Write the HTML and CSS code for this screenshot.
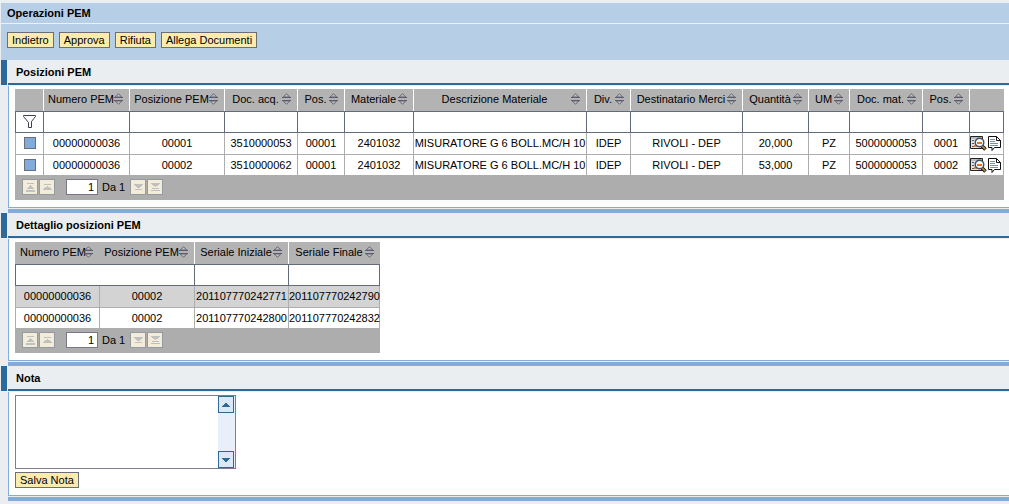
FILE: index.html
```html
<!DOCTYPE html>
<html lang="it">
<head>
<meta charset="utf-8">
<title>Operazioni PEM</title>
<link rel="stylesheet" href="styles.css">
</head>
<body>
<svg class="sprite" aria-hidden="true">
  <symbol id="sort" viewBox="0 0 9 12">
    <path d="M4.5 0.7 L7.6 4 H1.4 Z" fill="#c4c4cb" stroke="#62626f"/>
    <path d="M4.5 11.3 L7.6 8 H1.4 Z" fill="#c4c4cb" stroke="#62626f"/>
    <path d="M0 4h9v1H0zM0 7h9v1H0z" fill="#5c5c6c"/>
  </symbol>
  <symbol id="funnel" viewBox="0 0 13 14">
    <path d="M0.5 0.5 H12.5 V1.5 L8.5 6.5 V12.5 H5.5 V7.5 L0.5 1.5 Z" fill="#fff" stroke="#3c3c50"/>
  </symbol>
  <symbol id="first" viewBox="0 0 14 14">
    <path d="M4 3h7v1H4zM7 5h1v1h1v1h1v1h1v1H4V8h1V7h1V6h1zM3 10h9v2H3z"/>
  </symbol>
  <symbol id="prev" viewBox="0 0 14 14">
    <path d="M4 4h7v1H4zM7 6h1v1h2v1h1v1H4V8h1V7h2zM3 9h9v1H3z"/>
  </symbol>
  <symbol id="next" viewBox="0 0 14 14">
    <path d="M3 4h9v1H3zM4 5h7v1h-1v1H9v1H6V7H5V6H4zM4 9h7v1H4z"/>
  </symbol>
  <symbol id="last" viewBox="0 0 14 14">
    <path d="M3 3h9v1H3zM4 4h7v1h-1v1H8v1H7V6H5V5H4zM4 8h7v1H4zM3 10h9v1H3z"/>
  </symbol>
  <symbol id="detail" viewBox="0 0 17 15">
    <path d="M0.5 0.5h12v12H0.5z" fill="#dfe3e8" stroke="#222"/>
    <path d="M1 1h11v2H1z" fill="#b9bec5"/>
    <path d="M2 4h2v1H2zM2 7h2v1H2zM2 10h2v1H2z" fill="#4d5a68"/>
    <path d="M4 9h3v2H4z" fill="#f08030"/>
    <path d="M12 10 L15.5 13.5" stroke="#111" stroke-width="3.6"/>
    <path d="M12.2 10.2 L15.2 13.2" stroke="#b98748" stroke-width="1.8"/>
    <circle cx="9.5" cy="6.5" r="4.3" fill="#f4f7fc" stroke="#4a4e58" stroke-width="1.4"/>
    <path d="M7 6h5v2H7z" fill="#f07018"/>
  </symbol>
  <symbol id="note" viewBox="0 0 14 15">
    <path d="M0.5 0.5h8l4 4v7h-6l-2.5 3v-3h-3.5z" fill="#fff" stroke="#111"/>
    <path d="M8.5 0.5v4h4z" fill="#fff" stroke="#111"/>
    <path d="M2 3h5v1H2zM2 5h5v1H2zM2 7h8v1H2zM2 9h8v1H2z" fill="#7d90a8"/>
  </symbol>
</svg>

<header class="page-header">
  <h1>Operazioni PEM</h1>
  <div class="toolbar">
    <button class="btn" type="button">Indietro</button>
    <button class="btn" type="button">Approva</button>
    <button class="btn" type="button">Rifiuta</button>
    <button class="btn" type="button">Allega Documenti</button>
  </div>
</header>

<main>
<section class="panel">
  <div class="panel-title"><h2>Posizioni PEM</h2></div>
  <div class="panel-frame"><div class="panel-body">
    <table class="grid grid-wide">
      <colgroup><col class="w28"><col class="w86"><col class="w95"><col class="w73"><col class="w47"><col class="w69"><col class="w173"><col class="w44"><col class="w112"><col class="w66"><col class="w41"><col class="w73"><col class="w47"><col class="w35"></colgroup>
      <thead>
        <tr class="head">
          <th></th>
          <th><div class="label"><span>Numero PEM</span><svg><use href="#sort"/></svg></div></th>
          <th><div class="label"><span>Posizione PEM</span><svg><use href="#sort"/></svg></div></th>
          <th><div class="label"><span>Doc. acq.</span><svg><use href="#sort"/></svg></div></th>
          <th><div class="label"><span>Pos.</span><svg><use href="#sort"/></svg></div></th>
          <th><div class="label"><span>Materiale</span><svg><use href="#sort"/></svg></div></th>
          <th><div class="label"><span>Descrizione Materiale</span><svg><use href="#sort"/></svg></div></th>
          <th><div class="label"><span>Div.</span><svg><use href="#sort"/></svg></div></th>
          <th><div class="label"><span>Destinatario Merci</span><svg><use href="#sort"/></svg></div></th>
          <th><div class="label"><span>Quantità</span><svg><use href="#sort"/></svg></div></th>
          <th><div class="label"><span>UM</span><svg><use href="#sort"/></svg></div></th>
          <th><div class="label"><span>Doc. mat.</span><svg><use href="#sort"/></svg></div></th>
          <th><div class="label"><span>Pos.</span><svg><use href="#sort"/></svg></div></th>
          <th></th>
        </tr>
        <tr class="filter">
          <td><button class="icon-btn" type="button" aria-label="Filtra"><svg class="funnel"><use href="#funnel"/></svg></button></td>
          <td><input type="text" aria-label="Filtro Numero PEM"></td>
          <td><input type="text" aria-label="Filtro Posizione PEM"></td>
          <td><input type="text" aria-label="Filtro Doc. acq."></td>
          <td><input type="text" aria-label="Filtro Pos."></td>
          <td><input type="text" aria-label="Filtro Materiale"></td>
          <td><input type="text" aria-label="Filtro Descrizione Materiale"></td>
          <td><input type="text" aria-label="Filtro Div."></td>
          <td><input type="text" aria-label="Filtro Destinatario Merci"></td>
          <td><input type="text" aria-label="Filtro Quantità"></td>
          <td><input type="text" aria-label="Filtro UM"></td>
          <td><input type="text" aria-label="Filtro Doc. mat."></td>
          <td><input type="text" aria-label="Filtro Pos. mat."></td>
          <td></td>
        </tr>
      </thead>
      <tbody>
        <tr>
          <td><button class="marker" type="button" aria-label="Seleziona riga 1"></button></td>
          <td>00000000036</td><td>00001</td><td>3510000053</td><td>00001</td><td>2401032</td><td>MISURATORE G 6 BOLL.MC/H 10</td><td>IDEP</td><td>RIVOLI - DEP</td><td>20,000</td><td>PZ</td><td>5000000053</td><td>0001</td>
          <td><div class="actions"><button class="icon-btn" type="button" aria-label="Dettaglio"><svg class="detail"><use href="#detail"/></svg></button><button class="icon-btn" type="button" aria-label="Nota"><svg class="note"><use href="#note"/></svg></button></div></td>
        </tr>
        <tr>
          <td><button class="marker" type="button" aria-label="Seleziona riga 2"></button></td>
          <td>00000000036</td><td>00002</td><td>3510000062</td><td>00001</td><td>2401032</td><td>MISURATORE G 6 BOLL.MC/H 10</td><td>IDEP</td><td>RIVOLI - DEP</td><td>53,000</td><td>PZ</td><td>5000000053</td><td>0002</td>
          <td><div class="actions"><button class="icon-btn" type="button" aria-label="Dettaglio"><svg class="detail"><use href="#detail"/></svg></button><button class="icon-btn" type="button" aria-label="Nota"><svg class="note"><use href="#note"/></svg></button></div></td>
        </tr>
      </tbody>
      <tfoot><tr><td colspan="14"><div class="pager">
        <div class="pair"><button type="button" disabled aria-label="Prima pagina"><svg><use href="#first"/></svg></button><button type="button" disabled aria-label="Pagina precedente"><svg><use href="#prev"/></svg></button></div>
        <label><input type="text" value="1"><span>Da 1</span></label>
        <div class="pair"><button type="button" disabled aria-label="Pagina successiva"><svg><use href="#next"/></svg></button><button type="button" disabled aria-label="Ultima pagina"><svg><use href="#last"/></svg></button></div>
      </div></td></tr></tfoot>
    </table>
  </div></div>
</section>

<section class="panel">
  <div class="panel-title"><h2>Dettaglio posizioni PEM</h2></div>
  <div class="panel-frame"><div class="panel-body">
    <table class="grid grid-detail">
      <colgroup><col class="w84"><col class="w95"><col class="w94"><col class="w92"></colgroup>
      <thead>
        <tr class="head">
          <th><div class="label"><span>Numero PEM</span><svg><use href="#sort"/></svg></div></th>
          <th class="joined"><div class="label"><span>Posizione PEM</span><svg><use href="#sort"/></svg></div></th>
          <th><div class="label"><span>Seriale Iniziale</span><svg><use href="#sort"/></svg></div></th>
          <th><div class="label"><span>Seriale Finale</span><svg><use href="#sort"/></svg></div></th>
        </tr>
        <tr class="filter">
          <td colspan="2"><input type="text" aria-label="Filtro PEM"></td>
          <td><input type="text" aria-label="Filtro Seriale Iniziale"></td>
          <td><input type="text" aria-label="Filtro Seriale Finale"></td>
        </tr>
      </thead>
      <tbody>
        <tr class="selected"><td>00000000036</td><td>00002</td><td>201107770242771</td><td>201107770242790</td></tr>
        <tr><td>00000000036</td><td>00002</td><td>201107770242800</td><td>201107770242832</td></tr>
      </tbody>
      <tfoot><tr><td colspan="4"><div class="pager">
        <div class="pair"><button type="button" disabled aria-label="Prima pagina"><svg><use href="#first"/></svg></button><button type="button" disabled aria-label="Pagina precedente"><svg><use href="#prev"/></svg></button></div>
        <label><input type="text" value="1"><span>Da 1</span></label>
        <div class="pair"><button type="button" disabled aria-label="Pagina successiva"><svg><use href="#next"/></svg></button><button type="button" disabled aria-label="Ultima pagina"><svg><use href="#last"/></svg></button></div>
      </div></td></tr></tfoot>
    </table>
  </div></div>
</section>

<section class="panel">
  <div class="panel-title"><h2 id="nota">Nota</h2></div>
  <div class="panel-frame"><div class="panel-body note-form">
    <div class="note-box">
      <textarea aria-labelledby="nota"></textarea>
      <div class="scroll">
        <button type="button" aria-label="Scorri su"><svg viewBox="0 0 8 4"><path d="M3 0h2v1h1v1h1v1h1v1H0V3h1V2h1V1h1z"/></svg></button>
        <button type="button" aria-label="Scorri giù"><svg viewBox="0 0 8 4"><path d="M0 0h8v1H7v1H6v1H5v1H3V3H2V2H1V1H0z"/></svg></button>
      </div>
    </div>
    <button class="btn" type="button">Salva Nota</button>
  </div></div>
</section>
</main>
</body>
</html>
```
FILE: styles.css
```css
* { box-sizing: border-box; }

body {
  margin: 0;
  padding: 3px 0 0 1px;
  background: #eaeef1;
  color: #000;
  font: 11px/14px "Liberation Sans", Arial, sans-serif;
}

button, input, textarea { font: inherit; color: inherit; margin: 0; padding: 0; border-radius: 0; }
svg { display: block; }
h1, h2 { margin: 0; font-size: 11px; font-weight: bold; }
.sprite { display: none; }

.page-header { background: #b7cee7; }
.page-header h1 { padding: 3px 6px; border-bottom: 1px solid #eaf1f8; }
.toolbar { display: flex; gap: 5px; padding: 8px 6px 12px; }

.btn {
  height: 16px;
  padding: 0 4px;
  border: 1px solid #6b6f74;
  background: #fcebae;
  line-height: 14px;
  white-space: nowrap;
}

.panel-title {
  display: flex;
  height: 25px;
  border-left: 6px solid #2d6a9a;
}
.panel-title h2 {
  flex: 1;
  margin-left: 1px;
  padding: 5px 8px 4px;
  border-bottom: 2px solid #2d6a9a;
}
.panel-frame {
  margin: 1px 0 0 7px;
  padding-bottom: 1px;
  border-bottom: 4px solid #84abd9;
}
.panel-body {
  padding: 3px 5px 7px 6px;
  border-left: 1px solid #84abd9;
  border-bottom: 1px solid #84abd9;
  background: #fff;
}

.grid { table-layout: fixed; border-collapse: separate; border-spacing: 0; }
.grid-wide { width: 100%; }
.grid-detail { width: 365px; }
.grid th, .grid td { padding: 0; font-weight: normal; text-align: center; white-space: nowrap; }

.grid .head th { height: 22px; padding-bottom: 2px; background: #b3b3b3; border-left: 1px solid #fff; }
.grid .head th:first-child, .grid .head .joined { border-left-color: #b3b3b3; }
.label { display: flex; align-items: center; padding: 0 6px 0 4px; }
.label span { flex: 1; min-width: 0; }
.label svg { flex: none; width: 9px; height: 12px; }

.filter td { height: 22px; background: #fff; border: solid #636b7a; border-width: 1px 0 1px 1px; }
.filter td:last-child { border-right-width: 1px; }
.filter input { display: block; width: 100%; height: 20px; border: 0; background: transparent; outline: 0; }

.grid tbody td { height: 21px; background: #fff; border-left: 1px solid #adadad; }
.grid tbody td:last-child { border-right: 1px solid #adadad; }
.grid tbody tr:first-child td { padding-bottom: 1px; }
.grid tbody tr + tr td { border-top: 1px solid #adadad; }
.grid tbody .selected td { background: #d3d3d3; }

.icon-btn { display: block; margin: 0 auto; border: 0; background: none; }
.funnel { width: 13px; height: 14px; }
.marker { display: block; width: 12px; height: 12px; margin: 0 auto; border: 1px solid #6b6f78; background: #82aadb; }
.actions { display: flex; gap: 1px; }
.actions .icon-btn { margin: 0; }
.detail { width: 17px; height: 15px; }
.note { width: 14px; height: 15px; }

.grid tfoot td { height: 25px; padding-bottom: 1px; background: #adadad; }
.pager { display: flex; align-items: center; padding-left: 7px; }
.pager label { display: flex; align-items: center; gap: 4px; margin: 0 5px 0 11px; }
.pager input { width: 32px; height: 16px; padding-right: 3px; border: 1px solid #77778a; background: #fff; text-align: right; }
.pair { display: flex; gap: 1px; }
.pair button { width: 16px; height: 16px; border: 1px solid #939ba0; background: #f3ecd9; }
.pair svg { width: 14px; height: 14px; fill: #bfc0c2; }

.note-form { display: flex; flex-direction: column; align-items: flex-start; gap: 3px; }
.note-box { display: flex; width: 221px; height: 74px; border: 1px solid #7f7f8c; background: #fff; }
.note-box textarea { flex: 1; min-width: 0; border: 0; resize: none; overflow: hidden; outline: 0; }
.scroll { display: flex; flex-direction: column; justify-content: space-between; width: 17px; background: #e8eff8; }
.scroll button { display: flex; align-items: center; justify-content: center; width: 16px; height: 17px; border: 1px solid #2d6a9a; background: #dce8f5; }
.scroll svg { width: 8px; height: 4px; fill: #2d6a9a; }

.w28 { width: 28px; }
.w35 { width: 35px; }
.w41 { width: 41px; }
.w44 { width: 44px; }
.w47 { width: 47px; }
.w66 { width: 66px; }
.w69 { width: 69px; }
.w73 { width: 73px; }
.w84 { width: 84px; }
.w86 { width: 86px; }
.w92 { width: 92px; }
.w94 { width: 94px; }
.w95 { width: 95px; }
.w112 { width: 112px; }
.w173 { width: 173px; }
```
